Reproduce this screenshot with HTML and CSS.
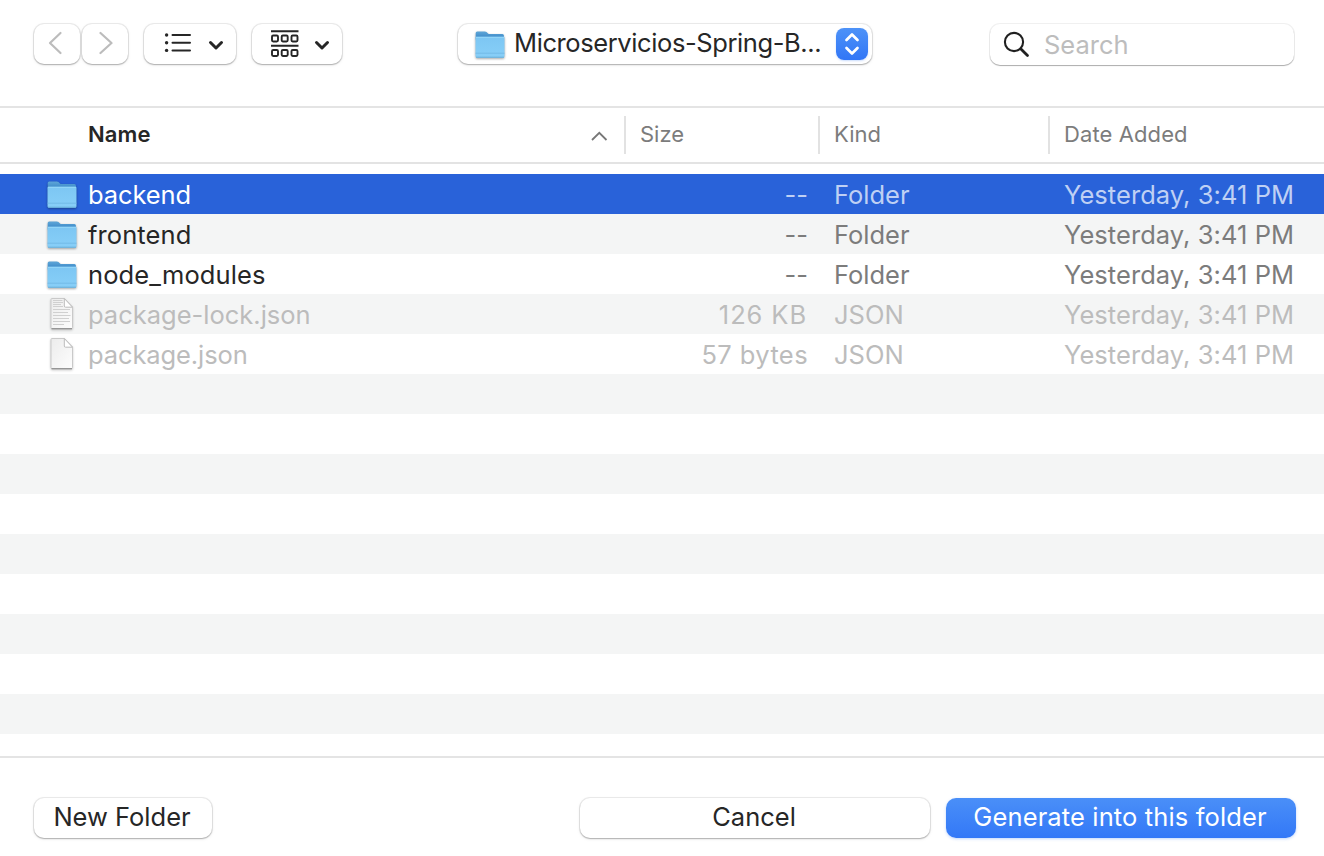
FILE: index.html
```
<!DOCTYPE html>
<html lang="en">
<head>
<meta charset="utf-8">
<title>Open</title>
<link rel="stylesheet" href="styles.css">
</head>
<body>
<svg width="0" height="0" class="defs" aria-hidden="true">
  <defs>
    <linearGradient id="front" x1="0" y1="0" x2="0" y2="1"><stop offset="0" stop-color="#7cc6f3"/><stop offset="1" stop-color="#88cff8"/></linearGradient>
    <linearGradient id="back" x1="0" y1="0" x2="0" y2="1"><stop offset="0" stop-color="#5ea6d8"/><stop offset="1" stop-color="#3583c4"/></linearGradient>
    <linearGradient id="sheet" x1="0" y1="0" x2="1" y2="1"><stop offset="0" stop-color="#ececec"/><stop offset="1" stop-color="#fdfdfd"/></linearGradient>
    <symbol id="folder" viewBox="0 0 32 32">
      <path d="M1.700 5q0-1.500 1.500-1.500h7.600q1 0 1.700.6l1.500 1.300q.6.500 1.400.5h13q1.500 0 1.500 1.500v4H1.700z" fill="url(#back)"/>
      <path d="M1.500 9.700q0-1 1-1h27q1 0 1 1v18.600q0 1.400-1.400 1.400H2.900q-1.400 0-1.400-1.400z" fill="url(#front)"/>
      <path d="M2 9.300h28" stroke="#97d8f8" stroke-width="1"/>
      <path d="M1.500 25.200h29" stroke="#6fb8e3" stroke-width=".8"/>
      <path d="M2 29.200h28" stroke="#68afd9" stroke-width="1"/>
    </symbol>
    <symbol id="page" viewBox="0 0 32 36">
      <path d="M4 3.500q0-1 1-1h12.500l8 8.500v20.500q0 1.200-1.200 1.200H5.200Q4 32.700 4 31.500z" fill="url(#sheet)" stroke="#c9c9c9" stroke-width="1"/>
      <path d="M4.500 32.700h20.500" stroke="#909090" stroke-width="1.200"/>
      <path d="M17.300 2.500v7.500q0 1.200 1.200 1.200h7z" fill="#fff" stroke="#bcbcbc" stroke-width="1"/>
    </symbol>
    <symbol id="lines" viewBox="0 0 32 36">
      <path d="M6 4.500h9.500M6 6.500h10M6 8.500h8M6 10.500h10M6 13.500h17M6 16.500h15M6 19.500h17.500M6 22.500h16M6 25.500h17M6 28.500h11" stroke="#d0d0d0" stroke-width="1"/>
    </symbol>
    <symbol id="chev" viewBox="0 0 16 12"><path d="M2.500 3.500 8 9l5.500-5.500" fill="none" stroke="#262626" stroke-width="3" stroke-linecap="round" stroke-linejoin="round"/></symbol>
  </defs>
</svg>
<main class="dialog">
  <header class="toolbar">
    <div class="nav">
      <button class="btn nav-btn"><svg width="16" height="24"><path d="M12.500 2 2 12l10.500 10" class="arrow"/></svg></button>
      <button class="btn nav-btn next"><svg width="16" height="24"><path d="M3.500 2l11 10-11 10" class="arrow"/></svg></button>
    </div>
    <button class="btn view list-view">
      <svg width="28" height="22"><g fill="#262626"><circle cx="2.600" cy="3" r="1.700"/><circle cx="2.600" cy="10.700" r="1.700"/><circle cx="2.600" cy="18.400" r="1.700"/></g><path d="M8.500 3h17.500M8.500 10.700h17.500M8.500 18.400h17.500" stroke="#262626" stroke-width="2" stroke-linecap="round"/></svg>
      <svg class="chev" width="16" height="12"><use href="#chev"/></svg>
    </button>
    <button class="btn view group-view">
      <svg width="30" height="28"><path d="M1 1.200h27.500M1 15.700h27.500" stroke="#262626" stroke-width="1.900"/><g fill="none" stroke="#262626" stroke-width="1.900"><rect x="2" y="5.500" width="6" height="6" rx="1.200"/><rect x="11.700" y="5.500" width="6" height="6" rx="1.200"/><rect x="21.500" y="5.500" width="6" height="6" rx="1.200"/><rect x="2" y="20" width="6" height="6" rx="1.200"/><rect x="11.700" y="20" width="6" height="6" rx="1.200"/><rect x="21.500" y="20" width="6" height="6" rx="1.200"/></g></svg>
      <svg class="chev" width="16" height="12"><use href="#chev"/></svg>
    </button>
    <button class="btn location">
      <svg class="folder" width="32" height="32"><use href="#folder"/></svg>
      <span class="path">Microservicios-Spring-B...</span>
      <span class="stepper"><svg width="16" height="24"><path d="M2.500 8 8 2.500 13.500 8M2.500 16 8 21.500 13.500 16" fill="none" stroke="#fff" stroke-width="2.700" stroke-linecap="round" stroke-linejoin="round"/></svg></span>
    </button>
    <label class="search">
      <svg width="28" height="28"><circle cx="11" cy="11" r="9.100" fill="none" stroke="#202020" stroke-width="2.100"/><path d="M17.700 17.700 24.500 24.500" stroke="#202020" stroke-width="2.800" stroke-linecap="round"/></svg>
      <span>Search</span>
    </label>
  </header>
  <section class="head">
    <div class="th name"><span>Name</span><svg width="18" height="12"><path d="M2 10 9.300 2.800 16.500 10" fill="none" stroke="#777" stroke-width="1.800"/></svg></div>
    <div class="th size-head">Size</div>
    <div class="th kind-head">Kind</div>
    <div class="th date-head">Date Added</div>
  </section>
  <section class="rows">
    <div class="row selected"><svg class="folder" width="32" height="32"><use href="#folder"/></svg><span class="file backend">backend</span><span class="size none">--</span><span class="kind">Folder</span><span class="date">Yesterday, 3:41 PM</span></div>
    <div class="row"><svg class="folder" width="32" height="32"><use href="#folder"/></svg><span class="file frontend">frontend</span><span class="size none">--</span><span class="kind">Folder</span><span class="date">Yesterday, 3:41 PM</span></div>
    <div class="row"><svg class="folder" width="32" height="32"><use href="#folder"/></svg><span class="file modules">node_modules</span><span class="size none">--</span><span class="kind">Folder</span><span class="date">Yesterday, 3:41 PM</span></div>
    <div class="row disabled"><svg class="page" width="32" height="36"><use href="#page"/><use href="#lines"/></svg><span class="file">package-lock.json</span><span class="size kb">126 KB</span><span class="kind">JSON</span><span class="date">Yesterday, 3:41 PM</span></div>
    <div class="row disabled"><svg class="page" width="32" height="36"><use href="#page"/></svg><span class="file package">package.json</span><span class="size bytes">57 bytes</span><span class="kind">JSON</span><span class="date">Yesterday, 3:41 PM</span></div>
    <div class="row"></div><div class="row"></div><div class="row"></div><div class="row"></div><div class="row"></div><div class="row"></div><div class="row"></div><div class="row"></div><div class="row"></div>
  </section>
  <footer class="footer">
    <button class="btn new">New Folder</button>
    <button class="btn cancel">Cancel</button>
    <button class="btn primary">Generate into this folder</button>
  </footer>
</main>
</body>
</html>
```
FILE: styles.css
```
* { box-sizing: border-box; }
body { margin: 0; background: #fff; font-family: Inter, "Liberation Sans", sans-serif; font-size: 25.500px; color: #262626; }
svg { display: block; flex: none; }
.defs { position: absolute; }
.dialog { width: 1324px; height: 856px; display: flex; flex-direction: column; overflow: hidden; }

.btn { font: inherit; color: inherit; border: 0; padding: 0; height: 40px; border-radius: 10px; background: #fff; display: flex; align-items: center; white-space: nowrap; box-shadow: 0 0 0 1px rgba(0,0,0,.07), 0 1px 1.500px rgba(0,0,0,.24), 0 1px 4px rgba(0,0,0,.06); }

.toolbar { height: 108px; flex: none; padding: 24px 29px 0 34px; display: flex; align-items: flex-start; border-bottom: 2px solid #e4e4e4; }
.nav { display: flex; gap: 2px; }
.nav-btn { width: 46px; padding: 0 0 2px 14px; }
.nav-btn.next { padding-left: 15px; }
.arrow { fill: none; stroke: #bcbcbc; stroke-width: 2.200; stroke-linecap: round; stroke-linejoin: round; }
.view { margin-left: 16px; justify-content: space-between; }
.list-view { width: 92px; padding: 0 12px 2px 20px; }
.group-view { width: 90px; padding: 0 12px 0 18px; }
.list-view .chev { margin-top: 3px; }
.group-view .chev { margin-top: 1px; }
.location { width: 414px; margin-left: 116px; padding: 0 4px 0 16px; }
.path { margin-left: 8px; width: 322px; text-align: left; padding-bottom: 3px; letter-spacing: -.4px; }
.stepper { width: 32px; height: 32px; border-radius: 8px; display: grid; place-items: center; background: linear-gradient(#4d92f8, #3176f6); margin-left: auto; box-shadow: 0 1px 2px rgba(49,118,246,.25); }
.search { width: 304px; height: 41px; margin-left: auto; border-radius: 10px; display: flex; align-items: center; padding-left: 13px; color: #bdbdbd; box-shadow: 0 0 0 1px rgba(0,0,0,.06), 0 1px 1px rgba(0,0,0,.28); margin-right: 1px; }
.search span { margin-left: 13px; padding-bottom: 1px; }

.folder { filter: drop-shadow(0 1px .8px rgba(0,0,0,.35)); }
.row .folder { margin-bottom: 2px; }
.page { filter: drop-shadow(0 1px .8px rgba(0,0,0,.2)); margin: 0 0 1px 1px; }

.head { height: 56px; flex: none; display: grid; grid-template-columns: 624px 194px 230px 276px; align-items: start; padding-top: 8px; border-bottom: 2px solid #e3e3e3; font-size: 22px; color: #7c7c7c; }
.th { height: 38px; line-height: 37px; padding-left: 14px; border-left: 2px solid #e2e2e2; }
.date-head { letter-spacing: .1px; }
.th.name { border: 0; padding: 0 16px 1px 88px; display: flex; justify-content: space-between; align-items: center; color: #262626; font-weight: 600; letter-spacing: .1px; }
.name svg { margin-top: 2px; }

.rows { padding-top: 10px; flex: none; }
.row { height: 40px; display: grid; grid-template-columns: 42px 532px 188px 230px 1fr; padding-left: 46px; align-items: center; color: #7c7c7c; line-height: 40px; }
.row:nth-child(even) { background: #f4f5f5; }
.row > span { padding-top: 1px; white-space: nowrap; }
.file { color: #262626; }
.backend { letter-spacing: -.1px; }
.frontend { letter-spacing: .1px; }
.modules { letter-spacing: .12px; }
.package { letter-spacing: -.1px; }
.size { text-align: right; }
.kb { letter-spacing: .9px; padding-right: 1px; }
.bytes { letter-spacing: .4px; }
.kind { padding-left: 26px; }
.row.selected { background: #2962d9; color: #bfd0f4; }
.selected .file { color: #fff; }
.disabled, .disabled .file { color: #bcbcbc; }
.date { padding-left: 26px; letter-spacing: .06px; }

.footer { margin-top: 22px; height: 100px; flex: none; border-top: 2px solid #e4e4e4; padding: 40px 28px 0 34px; display: flex; }
.footer .btn { justify-content: center; padding: 0 2px 3px 0; }
.new { width: 178px; }
.cancel { width: 350px; margin-left: auto; }
.footer .primary { width: 350px; margin-left: 16px; color: #fff; letter-spacing: .13px; background: linear-gradient(#4a8ff8, #3378f7); box-shadow: 0 1px 3px rgba(49,118,246,.3); }
```
